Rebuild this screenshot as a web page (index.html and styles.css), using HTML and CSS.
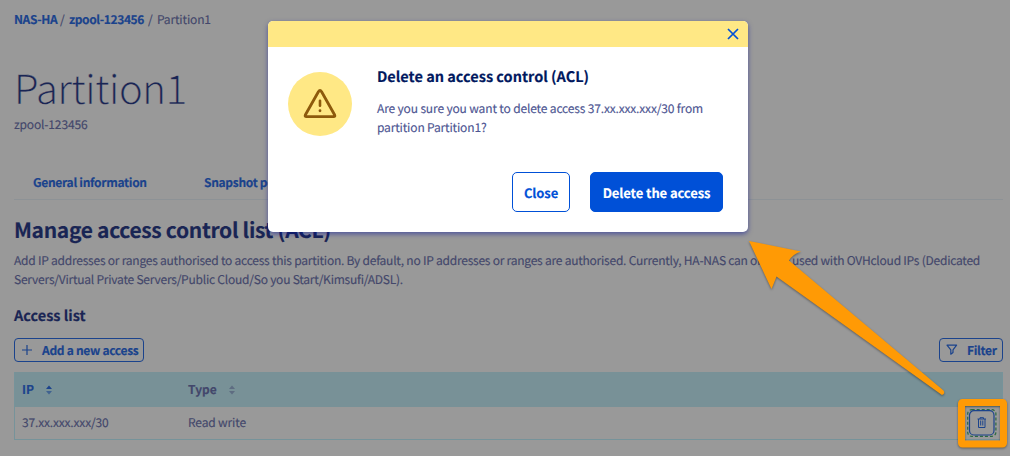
FILE: index.html
```html
<!DOCTYPE html>
<html lang="en">
<head>
<meta charset="utf-8">
<title>Partition1</title>
<link rel="stylesheet" href="styles.css">
</head>
<body>
<main class="page">
  <nav class="crumbs"><a class="crumb-link crumb-root">NAS-HA</a><span class="sep">/</span><a class="crumb-link crumb-pool">zpool-123456</a><span class="sep">/</span><span class="crumb-here">Partition1</span></nav>
  <h1 class="title">Partition1</h1>
  <p class="subtitle">zpool-123456</p>
  <nav class="tabs"><a class="tab tab-info">General information</a><a class="tab tab-snap">Snapshot policy</a></nav>
  <h2 class="heading">Manage access control list (ACL)</h2>
  <p class="desc">Add IP addresses or ranges authorised to access this partition. By default, no IP addresses or ranges are authorised. Currently, HA-NAS can only be used with OVHcloud IPs (Dedicated<br>Servers/Virtual Private Servers/Public Cloud/So you Start/Kimsufi/ADSL).</p>
  <h3 class="subheading">Access list</h3>
  <div class="toolbar">
    <button class="tool add"><svg width="10" height="10" viewBox="0 0 10 10"><path d="M5 0v10M0 5h10" stroke="currentColor" stroke-width="1.2"/></svg><span class="tool-label">Add a new access</span></button>
    <button class="tool filter"><svg width="12" height="12" viewBox="0 0 12 12"><path d="M1 1.2h9.6L7 5.8v2.8L4.8 10.2V5.8z" fill="none" stroke="currentColor" stroke-width="1.2" stroke-linejoin="round"/></svg><span class="tool-label">Filter</span></button>
  </div>
  <div class="table">
    <div class="row head">
      <div class="cell ip sorted"><span class="ip-label">IP</span><svg width="8" height="10" viewBox="0 0 8 10"><path d="M1 4 4 .5 7 4z" fill="currentColor"/><path d="M1 6 4 9.500 7 6z" fill="currentColor" opacity=".6"/></svg></div>
      <div class="cell type"><span class="type-label">Type</span><svg width="8" height="10" viewBox="0 0 8 10"><path d="M1 4 4 .5 7 4zM1 6 4 9.500 7 6z" fill="currentColor" opacity=".5"/></svg></div>
    </div>
    <div class="row data">
      <div class="cell ip"><span class="ip-value">37.xx.xxx.xxx/30</span></div>
      <div class="cell type"><span class="type-value">Read write</span></div>
      <button class="trash"><svg width="30" height="28" viewBox="0 0 30 28" fill="none"><rect x=".7" y=".7" width="28.200" height="26.600" rx="4" stroke="#2c6940" stroke-width="1.200" stroke-dasharray="3 2"/><rect x="2.500" y="1.700" width="24.500" height="24.300" rx="4.500" stroke="#1b438c" stroke-width="1.200"/><path d="M10.500 10h8.500M13 10V8.700h3.500V10M11.500 10v8.500h6.500V10M13.700 11.500v5M15.800 11.500v5" stroke="#1b438c" stroke-width="1"/></svg></button>
    </div>
  </div>
</main>
<section class="modal">
  <header class="modal-bar"><svg width="12" height="12" viewBox="0 0 12 12"><path d="M1 1l10 10M11 1 1 11" stroke="#0050d7" stroke-width="1.700"/></svg></header>
  <div class="modal-body">
    <div class="warn"><svg width="34" height="32" viewBox="0 0 34 32" fill="none" stroke="#8d5a0c" stroke-linecap="round" stroke-linejoin="round"><path d="M15.400 3.800 2.300 27Q1.600 28.700 3.400 28.700H30.600Q32.400 28.700 31.700 27L18.600 3.800Q17 1.200 15.400 3.800Z" stroke-width="2.800"/><path d="M17 12.800v5" stroke-width="2.600"/><path d="M17 22.700v.1" stroke-width="2.800"/></svg></div>
    <div class="modal-text">
      <h4 class="modal-title">Delete an access control (ACL)</h4>
      <p class="modal-msg">Are you sure you want to delete access 37.xx.xxx.xxx/30 from<br>partition Partition1?</p>
    </div>
  </div>
  <footer class="modal-foot"><button class="btn close"><span>Close</span></button><button class="btn confirm"><span>Delete the access</span></button></footer>
</section>
<svg class="marks" width="1010" height="456" viewBox="0 0 1010 456">
  <path d="M749 241 801 251.500Q793 254 789 260.500L943.500 390.500Q945.500 393.500 942 395L776.500 276.500Q774 283 771.500 289Z" fill="#ff9a05"/>
  <rect x="961.500" y="402.500" width="42" height="41.500" rx="1" fill="none" stroke="#ff9a05" stroke-width="7" stroke-linejoin="round"/>
</svg>
</body>
</html>
```
FILE: styles.css
```css
* { box-sizing: border-box; margin: 0; padding: 0; }
body { width: 1010px; height: 456px; overflow: hidden; position: relative; background: #999; color: #43476b; font: 12px/18px "Noto Sans CJK SC", "Noto Sans", sans-serif; white-space: nowrap; text-rendering: geometricPrecision; -webkit-text-stroke: 0.15px currentColor; }
button { font: inherit; background: none; border: 0; text-rendering: inherit; }
svg { display: block; flex: none; }
.page { width: 989px; margin-left: 14px; padding-top: 11px; }
.crumbs { display: flex; height: 18px; }
.crumb-link { font-weight: 700; color: #1b438c; letter-spacing: -0.38px; }
.crumb-root { width: 43px; }
.crumb-pool { width: 76px; }
.sep { width: 12px; padding-left: 3px; }
.crumb-here { letter-spacing: -0.15px; }
.title { font-size: 40px; line-height: 50px; font-weight: 300; color: #192554; margin-top: 33px; letter-spacing: -0.35px; -webkit-text-stroke: 0.35px #999; }
.subtitle { margin-top: 4px; letter-spacing: -0.15px; }
.tabs { display: flex; height: 26px; margin-top: 40px; padding-left: 19px; border-bottom: 1px solid #8d9296; font-weight: 700; color: #1b438c; letter-spacing: -0.3px; }
.tab-info { width: 171px; }
.heading { font-size: 21px; line-height: 30px; color: #192554; margin-top: 15px; letter-spacing: -0.32px; }
.desc { line-height: 19px; margin-top: 6px; letter-spacing: -0.23px; }
.subheading { font-size: 14.5px; line-height: 20px; color: #192554; margin-top: 17px; }
.toolbar { display: flex; justify-content: space-between; margin-top: 12px; }
.tool { display: flex; align-items: center; height: 24px; border: 1px solid #1b438c; border-radius: 4px; color: #1b438c; font-weight: 700; padding-left: 7px; letter-spacing: -0.3px; }
.tool-label { padding-top: 2px; }
.add { width: 130px; gap: 10px; }
.filter { width: 64px; padding-left: 6px; gap: 9px; }
.table { margin-top: 10px; height: 68px; border: 1px solid #76939a; border-top: 0; }
.row { display: flex; align-items: center; }
.head { height: 35px; background: #789197; font-weight: 700; }
.data { height: 32px; letter-spacing: -0.15px; }
.cell { display: flex; align-items: center; }
.ip { width: 173px; padding-left: 7px; gap: 11px; }
.ip-label, .type-label { padding-top: 1px; }
.type { gap: 11px; }
.sorted { color: #1b438c; }
.trash { margin-left: auto; margin-right: 5px; width: 30px; height: 28px; }
.modal { position: absolute; left: 268px; top: 21px; width: 480px; height: 211px; background: #fff; border-radius: 5px; overflow: hidden; box-shadow: 0 2px 5px rgba(0,14,156,.5); }
.modal-bar { height: 26px; background: #ffe885; display: flex; justify-content: flex-end; align-items: center; padding-right: 9.5px; }
.modal-body { display: flex; padding: 20px 20px 0; height: 105px; gap: 25px; }
.warn { width: 64px; height: 64px; margin-top: 5px; border-radius: 50%; background: #ffe885; display: flex; justify-content: center; align-items: center; }
.modal-title { font-size: 14.5px; line-height: 20px; color: #00185e; }
.modal-msg { line-height: 19px; margin-top: 12px; color: #4d5592; letter-spacing: -0.15px; }
.modal-foot { display: flex; justify-content: flex-end; gap: 20px; padding-right: 25px; margin-top: 20px; }
.btn { height: 40px; padding-top: 2px; border-radius: 5px; border: 1px solid #0050d7; font-weight: 700; font-size: 13px; color: #0050d7; letter-spacing: -0.1px; }
.close { width: 58px; }
.confirm { width: 133px; background: #0050d7; color: #fff; }
.marks { position: absolute; left: 0; top: 0; pointer-events: none; filter: drop-shadow(0 1px 1px rgba(0,0,0,.4)); }
```
